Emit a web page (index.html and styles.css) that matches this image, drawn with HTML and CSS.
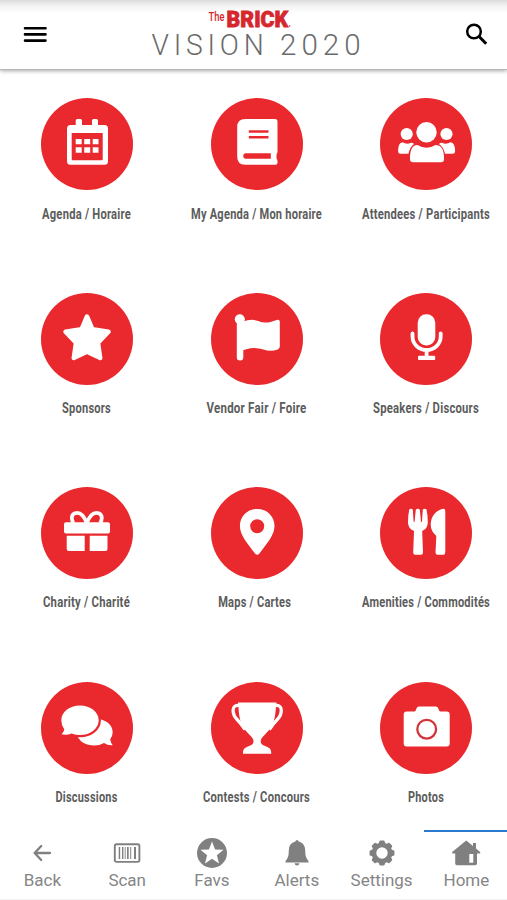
FILE: index.html
```html
<!DOCTYPE html>
<html lang="en">
<head>
<meta charset="utf-8">
<title>The Brick Vision 2020</title>
<link rel="stylesheet" href="styles.css">
</head>
<body>
<div class="app">
  <header class="bar">
    <svg class="bar-icon" viewBox="0 0 24 24"><path d="M2 5.200h20.500M2 11.400h20.500M2 17.600h20.500" fill="none" stroke="#000" stroke-width="2.600" stroke-linecap="round"/></svg>
    <svg class="logo" viewBox="140 0 230 65">
      <text class="logo-the" x="208.500" y="20.800" textLength="16" lengthAdjust="spacingAndGlyphs">The</text>
      <text class="logo-brick" x="226.600" y="26.800" textLength="61.500" lengthAdjust="spacingAndGlyphs">BRICK</text>
      <circle cx="289.600" cy="26" r=".8" fill="#d6282c"/>
      <text class="logo-vision" x="151.500" y="55.400" textLength="117" lengthAdjust="spacingAndGlyphs">VISION</text>
      <text class="logo-vision" x="280" y="55.400" textLength="85.500" lengthAdjust="spacingAndGlyphs">2020</text>
    </svg>
    <svg class="bar-icon" viewBox="0 0 24 24"><circle cx="9" cy="8.500" r="6.800" fill="none" stroke="#000" stroke-width="2.500"/><path d="M13.800 13.300l7.400 7.400" stroke="#000" stroke-width="3"/></svg>
  </header>

  <main class="grid">
    <a class="tile">
      <svg class="disc" viewBox="0 0 92 92"><path fill-rule="evenodd" d="M34.700 27v-4.500q0-1.500 1.500-1.500h3.300q1.500 0 1.500 1.500V27h10v-4.500q0-1.500 1.500-1.500h3q1.500 0 1.500 1.500V27h6.500q3.500 0 3.500 3.500v32.700q0 3.500-3.500 3.500h-34q-3.500 0-3.500-3.500V30.500q0-3.500 3.500-3.500zM30.700 35v26.300q0 1 1 1h29q1 0 1-1V35z"/><path d="M34.700 41h6v5.300h-6zm8.500 0h6v5.300h-6zm8.500 0h5.800v5.300h-5.800zM34.700 49.300h6v5.400h-6zm8.500 0h6v5.400h-6zm8.500 0h5.800v5.400h-5.800z"/></svg>
      <svg class="label" viewBox="0 0 150 24"><text x="74.500" y="16.500" textLength="89" lengthAdjust="spacingAndGlyphs">Agenda / Horaire</text></svg>
    </a>
    <a class="tile">
      <svg class="disc" viewBox="0 0 92 92"><path fill-rule="evenodd" d="M34.200 21H64q2.500 0 2.500 2.500V53.500q0 1.700-.8 2.500-.5 2.500 0 5 .8.800.8 2.200v1.500q0 2-2 2H34.200q-8 0-8-8V29q0-8 8-8zM37.800 32.200v2.500h19.700v-2.500zm0 5.900v2.500h19.700v-2.500zM35 55.300a2.700 2.700 0 0 0 0 5.400h24.800v-5.400z"/></svg>
      <svg class="label" viewBox="0 0 150 24"><text x="74.500" y="16.500" textLength="131" lengthAdjust="spacingAndGlyphs">My Agenda / Mon horaire</text></svg>
    </a>
    <a class="tile">
      <svg class="disc" viewBox="0 0 92 92"><circle cx="46.500" cy="34.300" r="10.200"/><circle cx="26.700" cy="36" r="6.100"/><circle cx="66.500" cy="36" r="6.100"/><path d="M37.500 47q9 5.500 18 0 8.500 0 8.500 13v1.500q0 2.800-3 2.800H33q-3 0-3-2.800V60q0-13 7.500-13zM22.500 44.300q4.500 2.600 8.500.4 2 0 3 1.200-4.200 3-5.500 9.800h-8q-2.400 0-2.400-2.300 0-8.500 4.400-9.100zM70.500 44.300q-4.500 2.600-8.500.4-2 0-3 1.200 4.500 3 6 9.800h7.700q2.400 0 2.400-2.300 0-8.500-4.600-9.100z"/></svg>
      <svg class="label" viewBox="0 0 150 24"><text x="75" y="16.500" textLength="128" lengthAdjust="spacingAndGlyphs">Attendees / Participants</text></svg>
    </a>

    <a class="tile">
      <svg class="disc" viewBox="0 0 92 92"><path class="rounded" d="M46 23.500l5.500 12.800 16 2.500-10.500 11 2.200 15.200L46 58.800 32.800 65 35 49.800 24.500 38.800l16-2.500z"/></svg>
      <svg class="label" viewBox="0 0 150 24"><text x="74.500" y="16.500" textLength="49" lengthAdjust="spacingAndGlyphs">Sponsors</text></svg>
    </a>
    <a class="tile">
      <svg class="disc" viewBox="0 0 92 92"><circle cx="28.800" cy="26.300" r="5"/><path d="M25.800 29h6.500v35.500a3 2.700 0 0 1-6.500 0zM32 28.500q8.500-3 15-.5t12.500 1q3-.8 6.300-2 3-.8 3 1.800v24.400q0 2.500-2 3.200-7.300 2.800-14.300.1-9-3-17-.3-1.800.7-3.500 1z"/></svg>
      <svg class="label" viewBox="0 0 150 24"><text x="74.500" y="16.500" textLength="100" lengthAdjust="spacingAndGlyphs">Vendor Fair / Foire</text></svg>
    </a>
    <a class="tile">
      <svg class="disc" viewBox="0 0 92 92"><rect x="37.700" y="21.200" width="17.600" height="31.300" rx="8.500"/><path d="M32.500 40.500v3a14.100 13.500 0 0 0 28.200 0v-3M46.600 57v7" fill="none" stroke="#fff" stroke-width="3.800" stroke-linecap="round"/><rect x="38" y="62.700" width="17.200" height="4.400" rx="1.200"/></svg>
      <svg class="label" viewBox="0 0 150 24"><text x="75" y="16.500" textLength="106" lengthAdjust="spacingAndGlyphs">Speakers / Discours</text></svg>
    </a>

    <a class="tile">
      <svg class="disc" viewBox="0 0 92 92"><rect x="23" y="35.300" width="46" height="11.200" rx="2"/><path d="M25.700 48.700h18V64H27.700q-2 0-2-2zM48.700 48.700h17.800V62q0 2-2 2H48.700z"/><path d="M45.800 36q-4-10.200-9.500-10.200-5.200 0-5.500 5 0 2.200 1.500 5M45.800 36q4-10.200 9.500-10.200 5.200 0 5.500 5 0 2.200-1.500 5" fill="none" stroke="#fff" stroke-width="3.800"/></svg>
      <svg class="label" viewBox="0 0 150 24"><text x="74.500" y="16" textLength="87" lengthAdjust="spacingAndGlyphs">Charity / Charité</text></svg>
    </a>
    <a class="tile">
      <svg class="disc" viewBox="0 0 92 92"><path fill-rule="evenodd" d="M46.200 22c10 0 17.300 7.500 17.300 17 0 9-7.500 17.500-15.300 27.700q-2 2-4 0C36.400 56.500 28.900 48 28.900 39c0-9.500 7.300-17 17.300-17zm0 10.200a7 7 0 1 0 0 14 7 7 0 0 0 0-14z"/></svg>
      <svg class="label" viewBox="0 0 150 24"><text x="72.700" y="16" textLength="73" lengthAdjust="spacingAndGlyphs">Maps / Cartes</text></svg>
    </a>
    <a class="tile">
      <svg class="disc" viewBox="0 0 92 92"><path d="M29.200 22.500q2-1.500 3.600 0l.8 12q.5 1.200 1 0l1.200-12q2-1.500 4 0l1.200 12q.5 1.200 1 0l.8-12q2-1.500 3.700 0 1.300 6 1.300 13 0 6-5.600 8.500l.8 21.500q0 2.200-2 2.200h-5.800q-2 0-2-2.200L34 44q-6-2.500-6-8.500 0-7 1.200-13zM65.300 24v41.500q0 2.200-2 2.200h-5.600q-2.200 0-2.200-2.200l.8-16.500q-5.600-5-5.600-11.500c0-8 5-14.500 12.600-15.800q2 0 2 2.300z"/></svg>
      <svg class="label" viewBox="0 0 150 24"><text x="75" y="16" textLength="128" lengthAdjust="spacingAndGlyphs">Amenities / Commodités</text></svg>
    </a>

    <a class="tile">
      <svg class="disc" viewBox="0 0 92 92"><path d="M54 36.700c10 0 17.700 5.500 17.700 13.500q0 3.500-2.500 7 .5 3.500 2.500 6-4.500.6-8.700-2.200-4.500 2.500-10 2.500c-8 0-14-3.500-16.500-9.500z"/><path class="front-bubble" d="M39 23.500c10.500 0 18.700 6.400 18.700 14.700S49.500 53 39 53q-4.500 0-8.500-1.500-4.500 2-10 .8 2.200-2 2.800-4.800-3-4-3-9.300c0-8.300 8.200-14.700 18.700-14.700z"/></svg>
      <svg class="label" viewBox="0 0 150 24"><text x="74.500" y="16.500" textLength="62" lengthAdjust="spacingAndGlyphs">Discussions</text></svg>
    </a>
    <a class="tile">
      <svg class="disc" viewBox="0 0 92 92"><path d="M27.200 20.500h38q.8 1.500-.2 3-.4 12-3.500 19-3 6-8 10.500-3.800 3.500-3.800 6.200 0 3 3.800 4.500 6.700 2 6.700 6.300v1.800H32V70q0-4.300 6.700-6.300 3.800-1.500 3.800-4.500 0-2.700-3.800-6.200-5-4.500-8-10.500-3-7-3.300-19-1-1.500-.2-3z"/><path d="M29 23.600q-6.900-1-6.900 4.600 0 5.300 4 9.300 4.500 4.500 8 10M63.400 23.600q6.900-1 6.900 4.600 0 5.300-4 9.300-4.500 4.500-8 10" fill="none" stroke="#fff" stroke-width="3.300"/></svg>
      <svg class="label" viewBox="0 0 150 24"><text x="74.500" y="16.500" textLength="107" lengthAdjust="spacingAndGlyphs">Contests / Concours</text></svg>
    </a>
    <a class="tile">
      <svg class="disc" viewBox="0 0 92 92"><path d="M26.700 29.500h7.600q1 0 1.400-1l1-2.500q.6-1.500 2.200-1.500h17q1.600 0 2.200 1.500l1 2.500q.4 1 1.400 1h6.200q3 0 3 3v29q0 3-3 3h-40q-3 0-3-3v-29q0-3 3-3z"/><circle cx="46.700" cy="47.200" r="9.400" fill="none" stroke="#d2343a" stroke-width="2.300"/></svg>
      <svg class="label" viewBox="0 0 150 24"><text x="75" y="16.500" textLength="36" lengthAdjust="spacingAndGlyphs">Photos</text></svg>
    </a>
  </main>

  <nav class="tabs">
    <a class="tab"><svg viewBox="-16 -16 32 32"><path d="M8 0H-7M-.8-7L-7.300 0-.8 7" fill="none" stroke="#808080" stroke-width="2.300" stroke-linecap="round"/></svg><span>Back</span></a>
    <a class="tab"><svg viewBox="-16 -16 32 32"><rect x="-12.200" y="-8.700" width="24.600" height="17.600" rx="1.800" fill="none" stroke="#808080" stroke-width="1.900"/><path d="M-8.300-6h1.500V6h-1.500zm3.300 0h1.400V6H-5zm2.700 0h.9V6h-.9zm2.300 0h1.700V6H0zm3.200 0h1V6h-1zm3.800 0h2V6H7z"/></svg><span>Scan</span></a>
    <a class="tab"><svg viewBox="-16 -16 32 32"><path fill-rule="evenodd" d="M0-15A15 15 0 1 1 0 15 15 15 0 0 1 0-15zM0-11.500L-3.100-3.500-11.500-3.200-4.900 2.300-7 10.500 0 5.800 7 10.500 4.900 2.300 11.500-3.200 3.100-3.500z"/></svg><span>Favs</span></a>
    <a class="tab"><svg viewBox="-16 -16 32 32"><path d="M0-13q1.300 0 1.600 1.500C6-10.500 8.200-7 8.200-2.500q0 7 2.500 9.500 1 1 1 2.500h-23.400q0-1.500 1-2.500 2.500-2.500 2.500-9.500 0-7.500 6.600-9Q-1.300-13 0-13zM-2.400 10.300h4.800q-.3 2.300-2.400 2.300t-2.400-2.300z"/></svg><span>Alerts</span></a>
    <a class="tab"><svg viewBox="-16 -16 32 32"><circle r="8" fill="none" stroke="#808080" stroke-width="4.600"/><path stroke="#808080" stroke-width="1.500" stroke-linejoin="round" d="M-2.800-9l1-2.700h3.600l1 2.700zM-2.800 9l1 2.700h3.600l1-2.700zM9-2.800l2.700 1v3.600l-2.700 1zM-9-2.800l-2.700 1v3.600l2.700 1zM4.400-8.300l2.600-1.200 2.500 2.500-1.200 2.600zM-4.400-8.300L-7-9.500-9.500-7l1.200 2.600zM4.400 8.300L7 9.500 9.500 7 8.300 4.400zM-4.400 8.300L-7 9.500-9.500 7l1.200-2.600z"/></svg><span>Settings</span></a>
    <a class="tab active"><svg viewBox="-16 -16 32 32"><path fill-rule="evenodd" d="M.2-12.500L7-7v-3h3v5.500L14.200-1v1.500h-3.200v10q0 1.800-1.800 1.800H-9q-1.800 0-1.800-1.800V.5h-3V-1zM3.300 1v8.700h4V1z"/></svg><span>Home</span></a>
  </nav>
</div>
</body>
</html>
```

FILE: styles.css
```css
* { box-sizing: border-box; }

body {
  margin: 0;
  background: #fff;
  font-family: Roboto, "Liberation Sans", sans-serif;
}

.app {
  display: flex;
  flex-direction: column;
  width: 507px;
  height: 900px;
  overflow: hidden;
}

.bar {
  display: flex;
  align-items: flex-start;
  justify-content: space-between;
  height: 70px;
  padding: 0 18px 0 23px;
  background: linear-gradient(#dcdcdc, #f3f3f3 6px, #fff 13px);
  border-bottom: 1px solid #b9b9b9;
  box-shadow: 0 1px 4px rgba(0, 0, 0, .35);
}

.bar-icon {
  width: 24px;
  height: 24px;
  margin-top: 23px;
}

.logo {
  width: 230px;
  height: 65px;
  margin-left: -2px;
}

.logo-the { font-size: 12.5px; font-weight: 500; fill: #d6282c; }
.logo-brick { font-size: 22px; font-weight: 900; fill: #d6282c; stroke: #d6282c; stroke-width: .8px; }
.logo-vision { font-size: 29.5px; font-weight: 300; letter-spacing: 5px; fill: #6b6b6b; }

.grid {
  display: grid;
  grid-template-columns: repeat(3, 169.5px);
  grid-auto-rows: 194.5px;
  height: 760px;
  padding: 28px 0 0 2.25px;
}

.tile {
  display: flex;
  flex-direction: column;
  align-items: center;
}

.disc {
  width: 92px;
  height: 92px;
  border-radius: 50%;
  background: #e9292e;
  fill: #fff;
}

.rounded {
  stroke: #fff;
  stroke-width: 4.5px;
  stroke-linejoin: round;
}

.front-bubble {
  stroke: #e9292e;
  stroke-width: 4.4px;
  paint-order: stroke;
}

.label {
  width: 150px;
  height: 24px;
  margin-top: 11.5px;
  overflow: visible;
}

.label text {
  font-size: 14.5px;
  font-weight: 700;
  letter-spacing: .3px;
  text-anchor: middle;
  fill: #5c5c5c;
}

.tabs {
  display: grid;
  grid-template-columns: repeat(6, 84.8px);
  height: 70px;
  border-bottom: 1px solid #f2f2f2;
}

.tab {
  display: flex;
  flex-direction: column;
  align-items: center;
  padding-top: 5px;
  border-top: 2.5px solid transparent;
  color: #858585;
  font-size: 17px;
  line-height: 20px;
}

.tab.active { border-top-color: #2a78cf; }

.tab svg {
  width: 32px;
  height: 32px;
  fill: #808080;
}

.tab span { margin-top: 1px; }
```
